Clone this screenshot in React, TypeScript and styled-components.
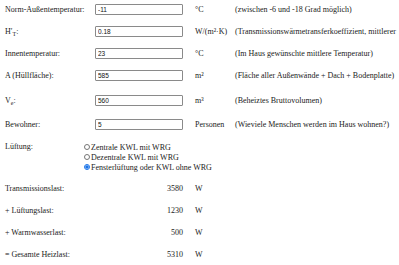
import React from "react";
import styled, { createGlobalStyle } from "styled-components";

const Global = createGlobalStyle`
  html, body { margin: 0; padding: 0; background: #fff; overflow: hidden; }
  body { font-family: "Liberation Serif", "Times New Roman", serif; color: #222; }
`;

const Page = styled.div`
  width: 399px;
  height: 265px;
  padding-left: 5px;
  box-sizing: border-box;
  font-size: 8px;
  display: flex;
  flex-direction: column;
  overflow: hidden;
`;

const Row = styled.div<{ $mt: number }>`
  display: grid;
  grid-template-columns: 79px 111px 40px auto;
  align-items: center;
  height: 18px;
  margin-top: ${(p) => p.$mt}px;
  white-space: nowrap;
`;

const Label = styled.div``;

const Sub = styled.sub`
  font-size: 6px;
  vertical-align: -2px;
  line-height: 0;
`;

const InputCell = styled.div`
  padding-left: 11px;
`;

const Field = styled.input`
  box-sizing: border-box;
  width: 88px;
  height: 11px;
  border: 1px solid #8a8a8a;
  border-radius: 1px;
  padding: 0 2px;
  margin: 0;
  font-family: "Liberation Sans", Arial, sans-serif;
  font-size: 6.5px;
  color: #111;
  background: #fff;
`;

const Unit = styled.div``;
const Desc = styled.div``;

const RadioRow = styled.div`
  display: grid;
  grid-template-columns: 79px auto;
  align-items: start;
  margin-top: 9px;
  white-space: nowrap;
`;

const RadioList = styled.div`
  display: flex;
  flex-direction: column;
`;

const RadioLine = styled.label`
  display: flex;
  align-items: center;
  height: 10px;
  gap: 1px;
`;

const LabelTop = styled.div`
  height: 10px;
  line-height: 10px;
`;

const Radio = styled.input`
  width: 6px;
  height: 6px;
  margin: 0;
  accent-color: #1a73e8;
`;

const Value = styled.div`
  text-align: right;
  padding-right: 12px;
`;

const inputs = [
  { label: "Norm-Außentemperatur:", value: "-11", unit: "°C", desc: "(zwischen -6 und -18 Grad möglich)", mt: 0 },
  {
    label: (
      <>
        H′<Sub>T</Sub>:
      </>
    ),
    value: "0.18",
    unit: "W/(m²·K)",
    desc: "(Transmissionswärmetransferkoeffizient, mittlerer",
    mt: 4,
  },
  { label: "Innentemperatur:", value: "23", unit: "°C", desc: "(Im Haus gewünschte mittlere Temperatur)", mt: 4 },
  { label: "A (Hüllfläche):", value: "585", unit: "m²", desc: "(Fläche aller Außenwände + Dach + Bodenplatte)", mt: 4 },
  {
    label: (
      <>
        V<Sub>e</Sub>:
      </>
    ),
    value: "560",
    unit: "m³",
    desc: "(Beheiztes Bruttovolumen)",
    mt: 7,
  },
  { label: "Bewohner:", value: "5", unit: "Personen", desc: "(Wieviele Menschen werden im Haus wohnen?)", mt: 6 },
];

const results = [
  { label: "Transmissionslast:", value: "3580", mt: 7 },
  { label: "+ Lüftungslast:", value: "1230", mt: 4 },
  { label: "+ Warmwasserlast:", value: "500", mt: 4 },
  { label: "= Gesamte Heizlast:", value: "5310", mt: 4 },
];

const options = ["Zentrale KWL mit WRG", "Dezentrale KWL mit WRG", "Fensterlüftung oder KWL ohne WRG"];

export default function App() {
  return (
    <>
      <Global />
      <Page>
        {inputs.map((r, i) => (
          <Row key={i} $mt={r.mt}>
            <Label>{r.label}</Label>
            <InputCell>
              <Field defaultValue={r.value} />
            </InputCell>
            <Unit>{r.unit}</Unit>
            <Desc>{r.desc}</Desc>
          </Row>
        ))}
        <RadioRow>
          <LabelTop>Lüftung:</LabelTop>
          <RadioList>
            {options.map((o, i) => (
              <RadioLine key={o}>
                <Radio type="radio" name="lueftung" defaultChecked={i === 2} />
                {o}
              </RadioLine>
            ))}
          </RadioList>
        </RadioRow>
        {results.map((r) => (
          <Row key={r.label} $mt={r.mt}>
            <Label>{r.label}</Label>
            <Value>{r.value}</Value>
            <Unit>W</Unit>
            <Desc />
          </Row>
        ))}
      </Page>
    </>
  );
}
